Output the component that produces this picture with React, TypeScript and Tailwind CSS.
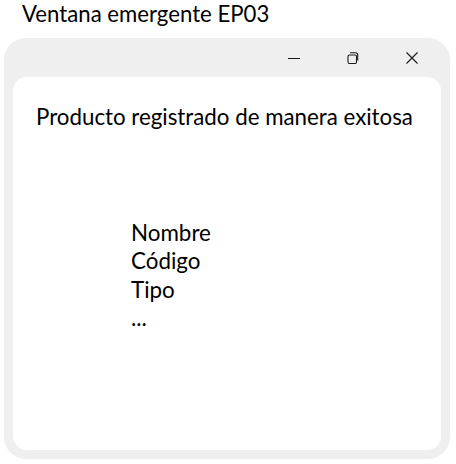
import type { JSX } from "react";

const font = { fontFamily: "Lato, 'Open Sans', sans-serif" };

const TitleButtons = (): JSX.Element => (
  <div className="flex h-[39px] justify-end items-center">
    {/* minimize */}
    <div className="flex w-[59px] h-full items-center justify-center">
      <svg width="14" height="14" viewBox="0 0 14 14">
        <line x1="1" y1="7.5" x2="13" y2="7.5" stroke="#1a1a1a" strokeWidth="1" />
      </svg>
    </div>
    {/* restore */}
    <div className="flex w-[59px] h-full items-center justify-center">
      <svg width="14" height="14" viewBox="0 0 14 14" fill="none" stroke="#1a1a1a" strokeWidth="1.1">
        <rect x="2" y="4" width="8.5" height="8.5" rx="1.5" />
        <path d="M4 1.8 h5.5 a2.2 2.2 0 0 1 2.2 2.2 v5.5" />
      </svg>
    </div>
    {/* close */}
    <div className="flex w-[59px] h-full items-center justify-center">
      <svg width="14" height="14" viewBox="0 0 14 14" fill="none" stroke="#1a1a1a" strokeWidth="1.1">
        <path d="M1.5 1.5 L12.5 12.5 M12.5 1.5 L1.5 12.5" />
      </svg>
    </div>
  </div>
);

export default function App(): JSX.Element {
  return (
    <div className="w-[456px] h-[464px] bg-white text-black overflow-hidden" style={font}>
      <div className="pl-[22px] h-[38px] text-[22.2px] leading-[28px]">Ventana emergente EP03</div>

      {/* Popup window */}
      <div className="ml-[4px] w-[446px] h-[421px] bg-[#efefef] rounded-[22px] flex flex-col px-[9px] pb-[9px]">
        <TitleButtons />
        <div className="flex-1 bg-white rounded-[14px] pt-[26px] pl-[23px]">
          <p className="text-[22.3px] leading-[28px]">Producto registrado de manera exitosa</p>
          <ul className="mt-[88px] pl-[95px] text-[22.4px] leading-[28.4px]">
            <li>Nombre</li>
            <li>Código</li>
            <li>Tipo</li>
            <li>...</li>
          </ul>
        </div>
      </div>
    </div>
  );
}
